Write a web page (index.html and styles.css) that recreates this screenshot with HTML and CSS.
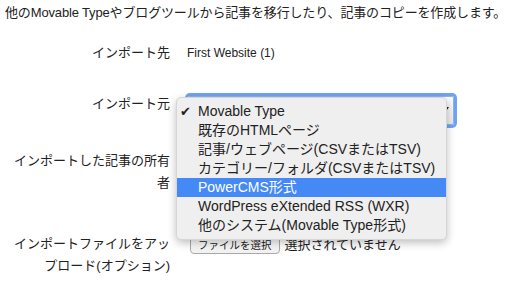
FILE: index.html
```html
<!DOCTYPE html>
<html lang="ja">
<head>
<meta charset="UTF-8" />
<title>インポート</title>
<link rel="stylesheet" href="styles.css">
</head>
<body>

<div class="page">
  <p class="intro">他のMovable Typeやブログツールから記事を移行したり、記事のコピーを作成します。</p>

  <!-- インポート先 -->
  <div class="field field-target">
    <div class="field-label">インポート先</div>
    <div class="field-value site-name">First Website (1)</div>
  </div>

  <!-- インポート元 -->
  <div class="field field-source">
    <div class="field-label">インポート元</div>
    <div class="field-value">
      <div class="select-wrap">
        <div class="select-box">
          <svg class="select-arrow" width="7" height="5" viewBox="0 0 7 5"><path d="M0 0 L7 0 L3.5 5 Z" fill="#222"/></svg>
        </div>
        <ul class="select-menu">
          <li class="menu-item checked">Movable Type</li>
          <li class="menu-item">既存のHTMLページ</li>
          <li class="menu-item">記事/ウェブページ(CSVまたはTSV)</li>
          <li class="menu-item">カテゴリー/フォルダ(CSVまたはTSV)</li>
          <li class="menu-item active">PowerCMS形式</li>
          <li class="menu-item">WordPress eXtended RSS (WXR)</li>
          <li class="menu-item">他のシステム(Movable Type形式)</li>
        </ul>
      </div>
    </div>
  </div>

  <!-- 所有者 -->
  <div class="field field-owner">
    <div class="field-label">インポートした記事の所有者</div>
    <div class="field-value"></div>
  </div>

  <!-- ファイル -->
  <div class="field field-file">
    <div class="field-label">インポートファイルをアップロード(オプション)</div>
    <div class="field-value file-row">
      <span class="file-button">ファイルを選択</span>
      <span class="file-name">選択されていません</span>
    </div>
  </div>
</div>

</body>
</html>
```

FILE: styles.css
```css
body {
  margin: 0;
  background-color: #fff;
  color: #222;
  font-family: 'Liberation Sans', 'Noto Sans CJK JP', sans-serif;
  font-size: 13px;
  line-height: 22px;
}

.page {
  padding: 2px 6px 0 5px;
}

.intro {
  margin: 0 0 18px 0;
  white-space: nowrap;
  letter-spacing: -0.15px;
}

/* フォームの行 */
.field {
  display: flex;
  align-items: flex-start;
}

.field-label {
  width: 165px;
  flex-shrink: 0;
  text-align: right;
}

.field-value {
  margin-left: 16px;
  flex: 1;
}

.field-target {
  margin-bottom: 29px;
}

.site-name {
  font-size: 12px;
  margin-left: 17px;
}

.field-source {
  margin-bottom: 25px;
}

.field-owner {
  margin-bottom: 39px;
}

/* セレクトボックス */
.select-wrap {
  position: relative;
  margin: 3px 0 0 2px;
  width: 266px;
}

.select-box {
  height: 27px;
  border: 1px solid #8db4ec;
  border-radius: 2px;
  background: linear-gradient(#fdfdfd, #e9e9e9);
  box-shadow: 0 0 0 3px #6fa3f2;
  position: relative;
}

.select-arrow {
  position: absolute;
  right: 4px;
  top: 10px;
}

.select-menu {
  position: absolute;
  left: -12px;
  top: 1px;
  width: 271px;
  margin: 0;
  padding: 4px 0;
  list-style: none;
  box-sizing: border-box;
  background-color: #efefef;
  border: 1px solid #d6d6d6;
  border-radius: 5px;
  box-shadow: 0 3px 8px rgba(0, 0, 0, 0.25);
  font-size: 14px;
  z-index: 5;
}

.menu-item {
  position: relative;
  height: 19px;
  line-height: 19px;
  padding-left: 21px;
  color: #222;
  white-space: nowrap;
}

.menu-item.checked::before {
  content: '\2714';
  position: absolute;
  left: 3px;
  top: 0;
  font-family: 'DejaVu Sans', sans-serif;
  font-size: 13px;
}

.menu-item.active {
  background-color: #4489f5;
  color: #fff;
}

/* ファイル選択 */
.file-row {
  display: flex;
  align-items: center;
  height: 22px;
  margin-left: 20px;
  margin-top: 1px;
}

.file-button {
  font-size: 10.5px;
  line-height: 15px;
  padding: 0 7px;
  border: 1px solid #a9a9a9;
  border-radius: 4px;
  background: linear-gradient(#ffffff, #f1f1f1);
  color: #222;
}

.file-name {
  margin-left: 5px;
}
```
